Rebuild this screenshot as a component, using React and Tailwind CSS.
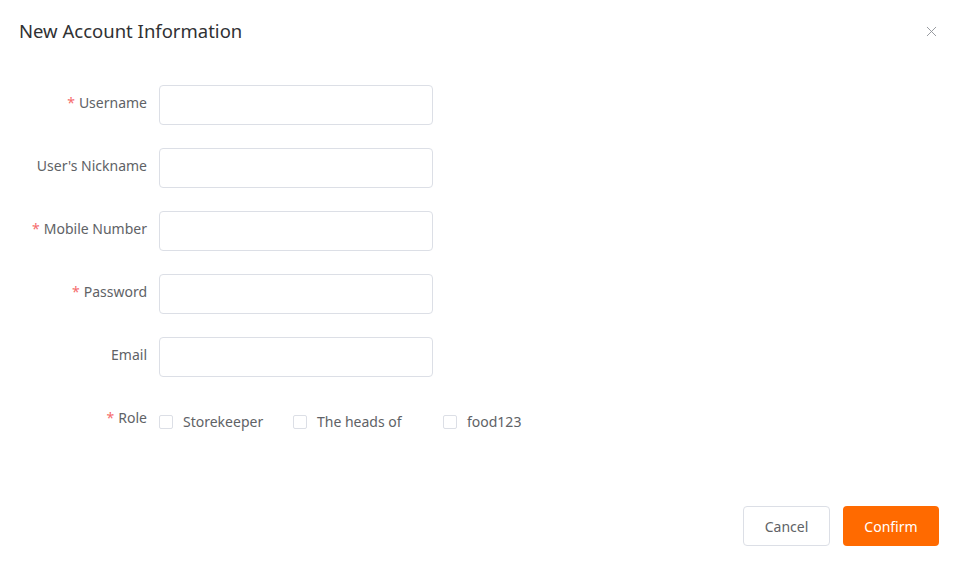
import { X } from "lucide-react"

const FIELDS = [
  { label: "Username", required: true },
  { label: "User's Nickname", required: false },
  { label: "Mobile Number", required: true },
  { label: "Password", required: true },
  { label: "Email", required: false },
]

const ROLES = [
  { label: "Storekeeper", w: "w-[134px]" },
  { label: "The heads of", w: "w-[150px]" },
  { label: "food123", w: "w-auto" },
]

function Label({ text, required, className = "" }) {
  return (
    <div className={`w-[159px] shrink-0 pr-3 text-right text-[14px] text-[#606266] ${className}`}>
      {required && <span className="text-[#f56c6c] mr-1">*</span>}
      {text}
    </div>
  )
}

export default function App() {
  return (
    <div className="w-[959px] h-[566px] bg-white relative"
      style={{ fontFamily: '"Noto Sans", "Open Sans", Arial, sans-serif' }}>

      {/* ── Header ── */}
      <div className="flex items-center justify-between pl-[19px] pr-[19px] pt-[18px] h-[44px]">
        <h2 className="text-[18.5px] leading-6 text-[#303133]">New Account Information</h2>
        <X size={17} strokeWidth={1.3} className="text-[#909399]" />
      </div>

      {/* ── Form ── */}
      <div className="pt-[41px]">
        {FIELDS.map(f => (
          <div key={f.label} className="flex items-center h-[40px] mb-[23px]">
            <Label text={f.label} required={f.required} className="-mt-[6px]" />
            <input className="w-[274px] h-[40px] border border-[#dcdfe6] rounded-[4px] px-3 outline-none" />
          </div>
        ))}

        <div className="flex items-center h-[40px]">
          <Label text="Role" required className="-mt-[6px]" />
          {ROLES.map(r => (
            <label key={r.label} className={`flex items-center mt-[3px] ${r.w} text-[14px] text-[#606266]`}>
              <span className="w-[14px] h-[14px] border border-[#dcdfe6] rounded-[2px] bg-white mr-[10px]" />
              {r.label}
            </label>
          ))}
        </div>
      </div>

      {/* ── Footer ── */}
      <div className="absolute right-[20px] bottom-[20px] flex gap-[13px]">
        <button className="w-[87px] h-[40px] border border-[#dcdfe6] rounded-[4px] text-[14px] text-[#606266] bg-white">
          Cancel
        </button>
        <button className="w-[96px] h-[40px] rounded-[4px] text-[14px] text-white bg-[#ff6a00]">
          Confirm
        </button>
      </div>
    </div>
  )
}
